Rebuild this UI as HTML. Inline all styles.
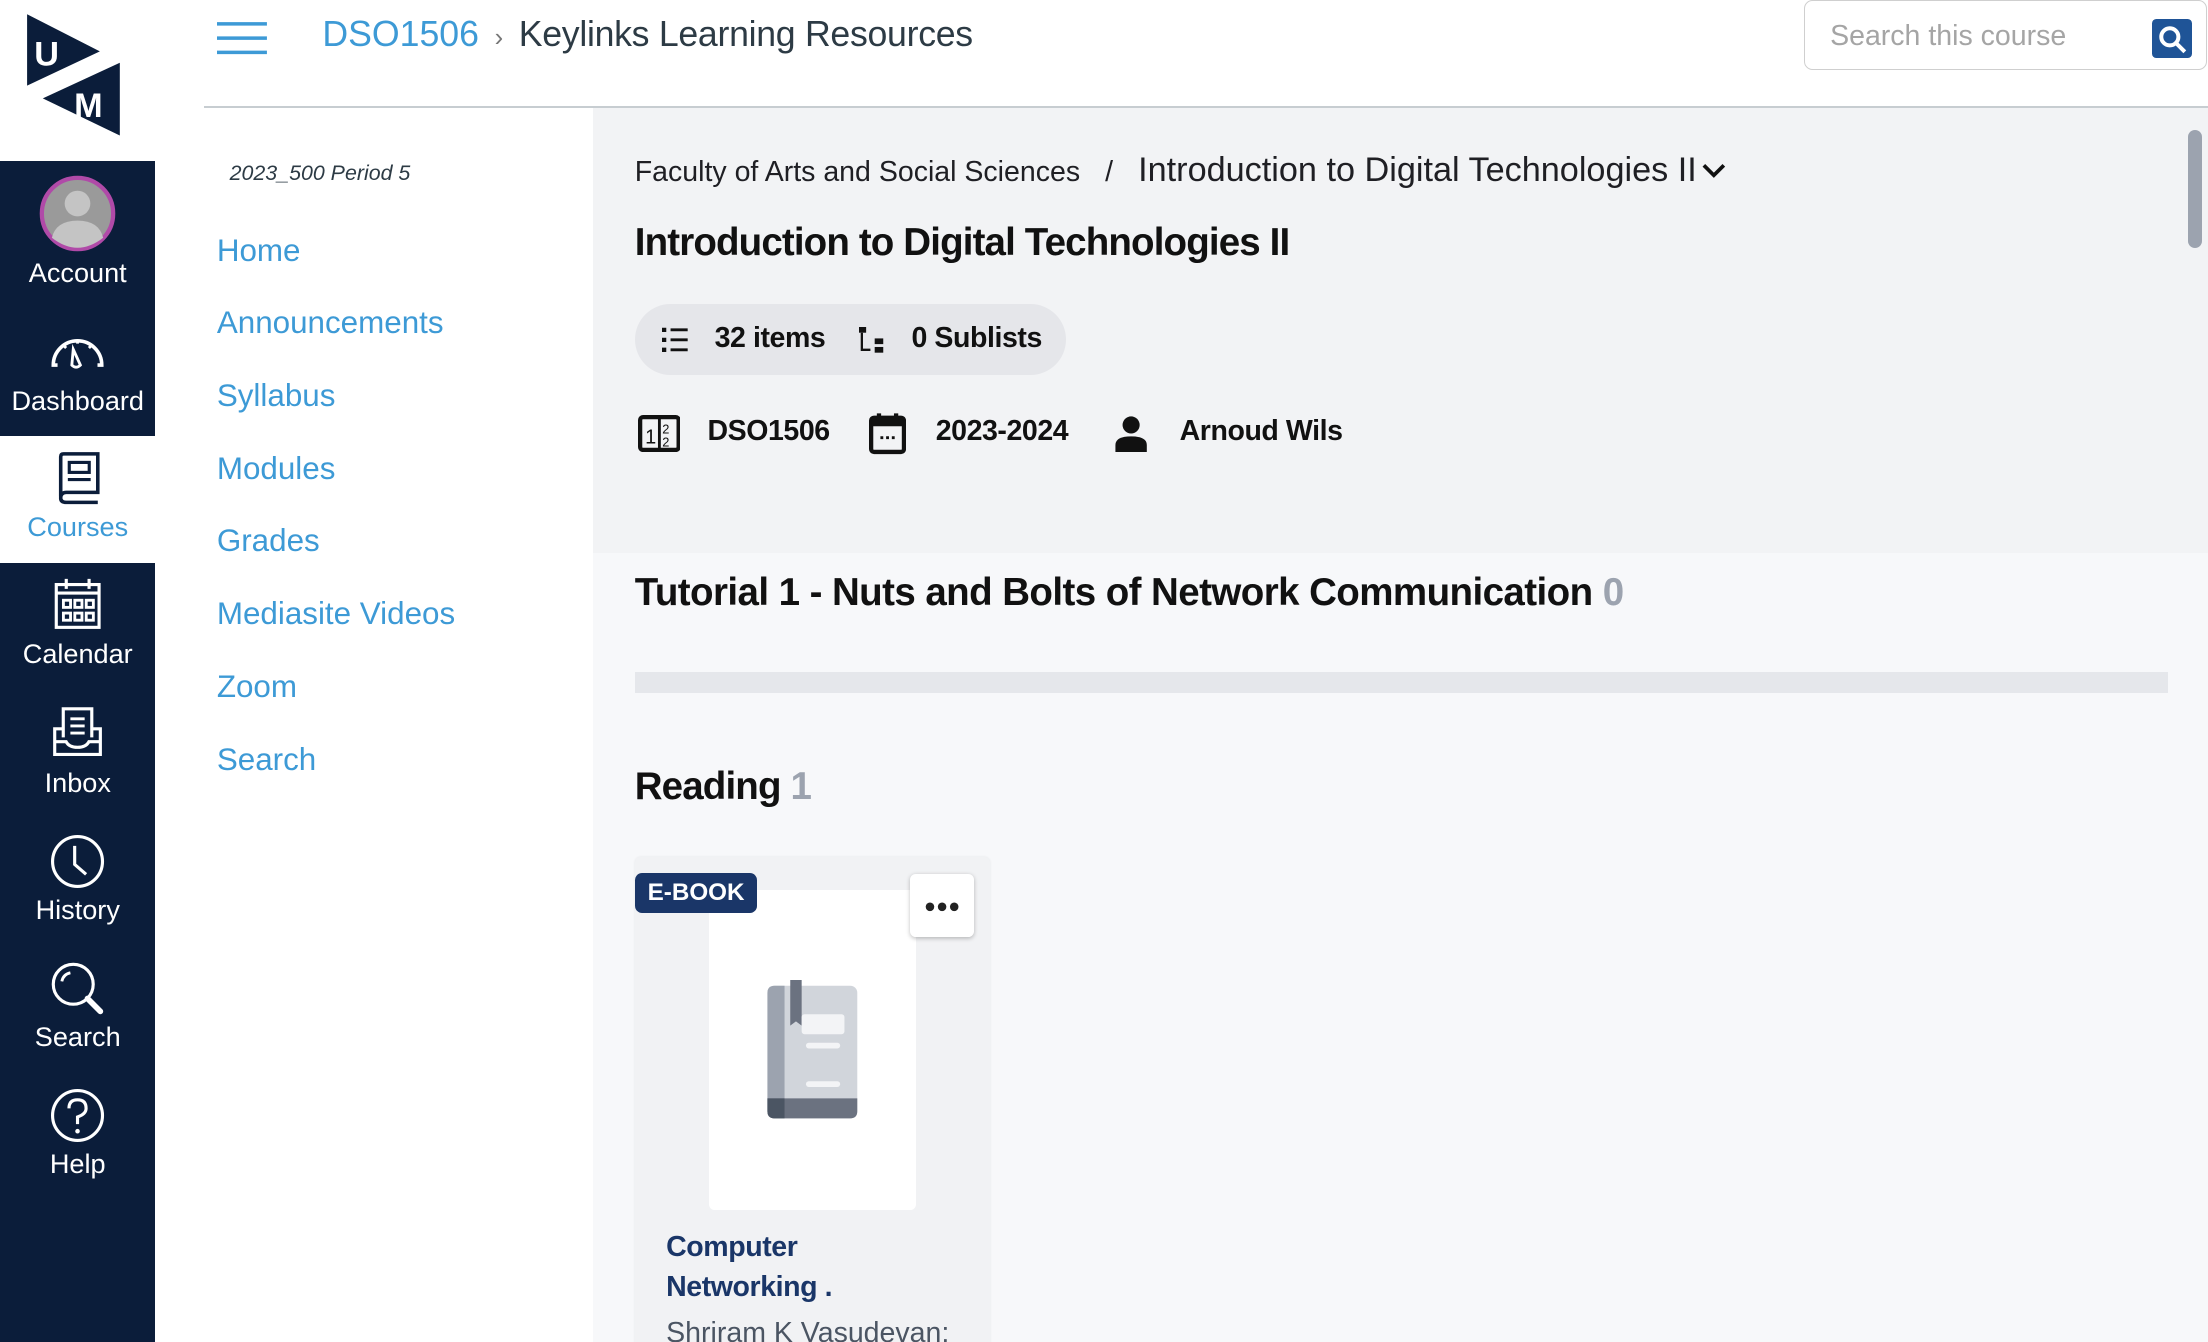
<!DOCTYPE html>
<html><head><meta charset="utf-8">
<style>
html,body{margin:0;padding:0;width:2208px;height:1342px;overflow:hidden;background:#fff}
#w{zoom:1.4264;position:relative;width:1548px;height:941px;overflow:hidden;font-family:"Liberation Sans",sans-serif}
.abs{position:absolute}
.nav{position:absolute;left:0;width:109px;background:#0b1d3a}
.ni{position:absolute;left:0;width:109px;text-align:center;color:#fff;font-size:19px}
.ni svg{display:block;margin:0 auto}
.cl{position:absolute;left:152px;color:#3d9ad6;font-size:22px}
.op{letter-spacing:-0.3px}
</style></head><body><div id="w">
<!-- logo -->
<svg class="abs" style="left:0;top:0" width="109" height="113">
<polygon points="19,10 70,36 19,60" fill="#0b1d3a"/>
<polygon points="84,44 84,95 30,69" fill="#0b1d3a"/>
<text x="24" y="46" fill="#fff" font-family="Liberation Sans" font-weight="bold" font-size="24">U</text>
<text x="52" y="82" fill="#fff" font-family="Liberation Sans" font-weight="bold" font-size="24">M</text>
</svg>
<div class="nav" style="top:113px;height:193px"></div>
<div class="abs" style="left:0;top:306px;width:109px;height:89px;background:#fff"></div>
<div class="nav" style="top:395px;height:560px"></div>

<div class="ni" style="top:123px"><svg width="54" height="54" viewBox="0 0 54 54"><circle cx="27" cy="27" r="25" fill="#9a9a9a" stroke="#b04aa8" stroke-width="3"/><circle cx="27" cy="20" r="9" fill="#c4c4c4"/><path d="M9 44 Q12 32 27 32 Q42 32 45 44 Q36 51 27 51 Q18 51 9 44Z" fill="#c4c4c4"/></svg><div style="margin-top:3px">Account</div></div>
<div class="ni" style="top:230px"><svg width="40" height="30" viewBox="0 0 40 30"><path d="M6 26 H3 A17 17 0 0 1 37 26 H34" fill="none" stroke="#fff" stroke-width="2.5"/><path d="M17 15 L22 26 Q19 29 16 26Z" fill="none" stroke="#fff" stroke-width="2"/><path d="M20 8v3M10 12l2 2M30 12l-2 2" stroke="#fff" stroke-width="2"/></svg><div style="margin-top:10px">Dashboard</div></div>
<div class="ni" style="top:316px;color:#3d9ad6"><svg width="32" height="38" viewBox="0 0 32 38"><path d="M4 32 V4 Q4 2 6 2 H30 V29 H8 Q4 29 4 33 Q4 36 8 36 H30" fill="none" stroke="#0b1d3a" stroke-width="2.5"/><rect x="10" y="8" width="14" height="7" fill="none" stroke="#0b1d3a" stroke-width="2.2"/><path d="M9 20H25" stroke="#0b1d3a" stroke-width="2.2"/></svg><div style="margin-top:4px">Courses</div></div>
<div class="ni" style="top:404px"><svg width="36" height="38" viewBox="0 0 36 38"><rect x="3" y="6" width="30" height="30" fill="none" stroke="#fff" stroke-width="2.2"/><path d="M3 12H33M10 2v7M26 2v7" stroke="#fff" stroke-width="2.2"/><g fill="none" stroke="#fff" stroke-width="2"><rect x="8" y="17" width="5" height="5"/><rect x="16" y="17" width="5" height="5"/><rect x="24" y="17" width="5" height="5"/><rect x="8" y="26" width="5" height="5"/><rect x="16" y="26" width="5" height="5"/><rect x="24" y="26" width="5" height="5"/></g></svg><div style="margin-top:5px">Calendar</div></div>
<div class="ni" style="top:495px"><svg width="40" height="36" viewBox="0 0 40 36"><path d="M10 22V2H30V22" fill="none" stroke="#fff" stroke-width="2.2"/><path d="M15 9H25M15 14H25M15 19H25" stroke="#fff" stroke-width="2"/><path d="M10 16H4V34H36V16H30M4 25H12Q14 29 20 29Q26 29 28 25H36" fill="none" stroke="#fff" stroke-width="2.2"/></svg><div style="margin-top:7px">Inbox</div></div>
<div class="ni" style="top:584px"><svg width="40" height="40" viewBox="0 0 40 40"><circle cx="20" cy="20" r="17.5" fill="none" stroke="#fff" stroke-width="2.2"/><path d="M18 9V22L26 29" fill="none" stroke="#fff" stroke-width="2.2"/></svg><div style="margin-top:3px">History</div></div>
<div class="ni" style="top:673px"><svg width="40" height="40" viewBox="0 0 40 40"><circle cx="17" cy="17" r="14" fill="none" stroke="#fff" stroke-width="2.2"/><path d="M27 27L36 36" stroke="#fff" stroke-width="4" stroke-linecap="round"/><path d="M9 15Q10 10 15 9" fill="none" stroke="#fff" stroke-width="2"/></svg><div style="margin-top:3px">Search</div></div>
<div class="ni" style="top:762px"><svg width="40" height="40" viewBox="0 0 40 40"><circle cx="20" cy="20" r="17.5" fill="none" stroke="#fff" stroke-width="2.2"/><path d="M14 15Q14 9 20 9Q26 9 26 15Q26 19 20 21V26" fill="none" stroke="#fff" stroke-width="2.2"/><circle cx="20" cy="31" r="1.6" fill="#fff"/></svg><div style="margin-top:3px">Help</div></div>

<!-- header -->
<svg class="abs" style="left:152px;top:15px" width="35" height="24"><path d="M0 2H35M0 12H35M0 22H35" stroke="#3d9ad6" stroke-width="2.5"/></svg>
<div class="abs" style="left:226px;top:10px;font-size:25px;color:#3d9ad6;white-space:nowrap">DSO1506 <span style="color:#777;font-size:18px;margin:0 4px">›</span> <span style="color:#2d3b45;letter-spacing:-0.2px">Keylinks Learning Resources</span></div>
<div class="abs" style="left:1265px;top:0;width:281px;height:48px;border:1px solid #cfcfcf;border-radius:6px;background:#fff"></div>
<div class="abs" style="left:1283px;top:14px;font-size:20px;color:#a5a5a5">Search this course</div>
<div class="abs" style="left:1509px;top:13px;width:28px;height:28px;background:#1f5497;border-radius:3px"><svg width="28" height="28"><circle cx="12.5" cy="12.5" r="6" fill="none" stroke="#fff" stroke-width="2.8"/><path d="M17 17L23 23" stroke="#fff" stroke-width="2.8"/></svg></div>
<div class="abs" style="left:143px;top:74px;width:1405px;height:2px;background:#c7cdd1"></div>

<!-- course nav -->
<div class="abs" style="left:161px;top:113px;font-size:15px;font-style:italic;color:#2d3b45">2023_500 Period 5</div>
<div class="cl" style="top:163px">Home</div>
<div class="cl" style="top:214px">Announcements</div>
<div class="cl" style="top:265px">Syllabus</div>
<div class="cl" style="top:316px">Modules</div>
<div class="cl" style="top:367px">Grades</div>
<div class="cl" style="top:418px">Mediasite Videos</div>
<div class="cl" style="top:469px">Zoom</div>
<div class="cl" style="top:520px">Search</div>

<!-- content -->
<div class="abs" style="left:416px;top:76px;width:1132px;height:312px;background:#f2f3f5"></div>
<div class="abs" style="left:416px;top:388px;width:1132px;height:560px;background:#f7f8fa"></div>
<div class="abs" style="left:1534px;top:91px;width:10px;height:83px;border-radius:5px;background:#9ca3af"></div>

<div class="abs" style="left:445px;top:106px;font-size:20px;color:#1f1f24;white-space:nowrap">Faculty of Arts and Social Sciences <span style="margin:0 12px">/</span> <span style="font-size:24px">Introduction to Digital Technologies II</span><svg width="18" height="14" style="margin-left:3px"><path d="M2 3L9 10L16 3" fill="none" stroke="#111" stroke-width="2.6"/></svg></div>
<div class="abs" style="left:445px;top:155px;font-size:27px;font-weight:bold;color:#111;letter-spacing:-0.6px">Introduction to Digital Technologies II</div>

<div class="abs" style="left:445px;top:213px;width:302px;height:50px;border-radius:25px;background:#e5e6ea"></div>
<svg class="abs" style="left:464px;top:229px" width="20" height="18"><path d="M0 2h3M0 9h3M0 16h3" stroke="#111" stroke-width="3"/><path d="M6 2h12M6 9h12M6 16h12" stroke="#111" stroke-width="2"/></svg>
<div class="abs op" style="left:501px;top:226px;font-size:20px;font-weight:bold;color:#111">32 items</div>
<svg class="abs" style="left:602px;top:229px" width="20" height="20"><rect x="0" y="0" width="5" height="4" fill="#111"/><path d="M2 4V16H8" fill="none" stroke="#111" stroke-width="1.6"/><rect x="11" y="8" width="6" height="4" fill="#111"/><rect x="11" y="14" width="6" height="4" fill="#111"/></svg>
<div class="abs op" style="left:639px;top:226px;font-size:20px;font-weight:bold;color:#111">0 Sublists</div>

<svg class="abs" style="left:447px;top:291px" width="30" height="26"><rect x="1.5" y="1.5" width="27" height="23" rx="2" fill="none" stroke="#111" stroke-width="3"/><path d="M15 2V24" stroke="#111" stroke-width="2"/><text x="5" y="20" font-size="14" font-family="Liberation Sans" fill="#111">1</text><text x="17" y="13" font-size="9" font-family="Liberation Sans" fill="#111">2</text><text x="17" y="22" font-size="9" font-family="Liberation Sans" fill="#111">2</text></svg>
<div class="abs op" style="left:496px;top:291px;font-size:20px;font-weight:bold;color:#111">DSO1506</div>
<svg class="abs" style="left:609px;top:289px" width="26" height="30"><rect x="1.5" y="4" width="23" height="24" rx="2" fill="none" stroke="#111" stroke-width="3"/><rect x="1.5" y="4" width="23" height="6" fill="#111"/><path d="M7 1v5M19 1v5" stroke="#111" stroke-width="3"/><path d="M8 18h2M12 18h2M16 18h2" stroke="#111" stroke-width="2"/></svg>
<div class="abs op" style="left:656px;top:291px;font-size:20px;font-weight:bold;color:#111">2023-2024</div>
<svg class="abs" style="left:781px;top:291px" width="24" height="26"><circle cx="12" cy="7" r="6" fill="#111"/><path d="M1 26V21Q1 15 12 15Q23 15 23 21V26Z" fill="#111"/></svg>
<div class="abs op" style="left:827px;top:291px;font-size:20px;font-weight:bold;color:#111">Arnoud Wils</div>

<div class="abs" style="left:445px;top:400px;font-size:27px;font-weight:bold;color:#111;letter-spacing:-0.4px;white-space:nowrap">Tutorial 1 - Nuts and Bolts of Network Communication <span style="color:#9ca3af">0</span></div>
<div class="abs" style="left:445px;top:471px;width:1075px;height:15px;background:#e5e7eb"></div>
<div class="abs" style="left:445px;top:536px;font-size:27px;font-weight:bold;color:#111;letter-spacing:-0.6px">Reading <span style="color:#9ca3af">1</span></div>

<!-- card -->
<div class="abs" style="left:445px;top:601px;width:249px;height:360px;background:#f1f2f4;border-radius:4px;box-shadow:0 0 2px rgba(0,0,0,.08)"></div>
<div class="abs" style="left:497px;top:624px;width:145px;height:224px;background:#fff;border-radius:4px"></div>
<svg class="abs" style="left:537px;top:687px" width="66" height="100" viewBox="0 0 66 100"><rect x="1" y="4" width="63" height="93" rx="5" fill="#d1d5db"/><path d="M1 9Q1 4 6 4H13V97H6Q1 97 1 92Z" fill="#9ca3af"/><path d="M1 83H64V92Q64 97 59 97H6Q1 97 1 92Z" fill="#6b7280"/><path d="M1 83H13V97H6Q1 97 1 92Z" fill="#4b5563"/><path d="M17 0H25V32L21 29L17 32Z" fill="#6b7280"/><rect x="25" y="24" width="30" height="14" rx="2" fill="#f3f4f6"/><rect x="28" y="44" width="24" height="4" rx="2" fill="#f3f4f6"/><rect x="28" y="71" width="24" height="4" rx="2" fill="#f3f4f6"/></svg>
<div class="abs" style="left:445px;top:612px;width:86px;height:28px;background:#1a3668;border-radius:5px;color:#fff;font-weight:bold;font-size:17px;text-align:center;line-height:28px">E-BOOK</div>
<div class="abs" style="left:638px;top:613px;width:45px;height:44px;background:#fff;border-radius:4px;box-shadow:0 1px 3px rgba(0,0,0,.25)"><svg width="45" height="44"><circle cx="14" cy="23" r="3" fill="#222"/><circle cx="22.5" cy="23" r="3" fill="#222"/><circle cx="31" cy="23" r="3" fill="#222"/></svg></div>
<div class="abs" style="left:467px;top:861px;font-size:20px;font-weight:bold;color:#1a3668;line-height:28px;letter-spacing:-0.3px">Computer<br>Networking .</div>
<div class="abs" style="left:467px;top:923px;font-size:20px;color:#4b5563;white-space:nowrap">Shriram K Vasudevan;</div>
</div></body></html>
